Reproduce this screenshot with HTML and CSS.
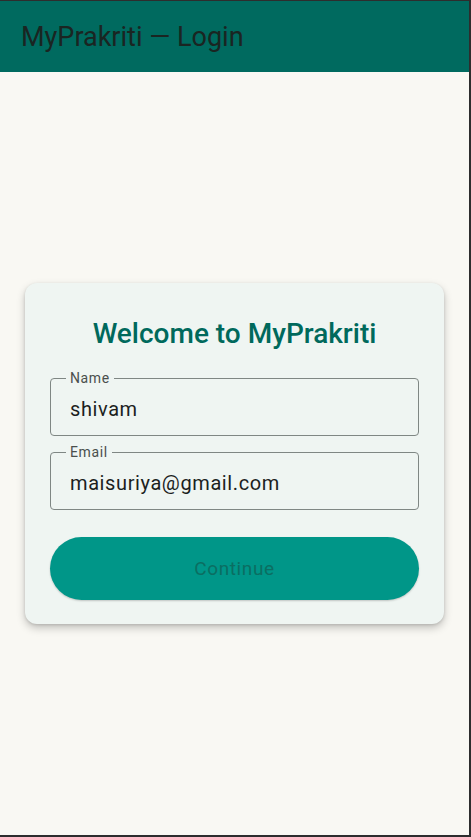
FILE: index.html
```html
<!DOCTYPE html>
<html lang="en">
<head>
<meta charset="utf-8">
<title>MyPrakriti — Login</title>
<link rel="stylesheet" href="styles.css">
</head>
<body>
<div class="frame">
  <header class="appbar">
    <h1 class="appbar-title">MyPrakriti — Login</h1>
  </header>
  <main class="content">
    <section class="card">
      <h2 class="card-title">Welcome to MyPrakriti</h2>
      <div class="field">
        <span class="field-label">Name</span>
        <span class="field-value">shivam</span>
      </div>
      <div class="field">
        <span class="field-label">Email</span>
        <span class="field-value">maisuriya@gmail.com</span>
      </div>
      <button class="btn" type="button">Continue</button>
    </section>
  </main>
</div>
</body>
</html>
```
FILE: styles.css
```css
* { box-sizing: border-box; }
html, body { margin: 0; padding: 0; }
body {
  font-family: Roboto, "Noto Sans", "Liberation Sans", sans-serif;
  background: #2d2d2d;
}
.frame {
  width: 471px;
  height: 837px;
  border-top: 1px solid #2d2d2d;
  border-right: 2px solid #2d2d2d;
  border-bottom: 2px solid #2d2d2d;
  display: flex;
  flex-direction: column;
  background: #f9f8f3;
}
.appbar {
  height: 71px;
  flex: none;
  background: #006a5f;
  display: flex;
  align-items: center;
  padding-left: 21px;
}
.appbar-title {
  margin: 0;
  font-weight: 400;
  font-size: 27px;
  color: #1a2522;
  letter-spacing: 0;
}
.content {
  flex: 1;
  display: flex;
  align-items: center;
  justify-content: flex-start;
  padding: 0 0 0 25px;
}
.card {
  width: 419px;
  background: #eff5f2;
  border-radius: 12px;
  box-shadow: 0 4px 8px rgba(0,0,0,0.22), 0 1px 3px rgba(0,0,0,0.12);
  padding: 35px 25px 24px;
  display: flex;
  flex-direction: column;
}
.card-title {
  margin: 0 0 28px;
  text-align: center;
  font-size: 28px;
  line-height: 32px;
  font-weight: 500;
  color: #00695c;
}
.field {
  position: relative;
  height: 58px;
  border: 1px solid #7f8784;
  border-radius: 4px;
  display: flex;
  align-items: center;
  padding: 0 19px;
  margin-bottom: 16px;
}
.field-label {
  position: absolute;
  top: -9px;
  left: 15px;
  padding: 0 4px;
  background: #eff5f2;
  font-size: 14px;
  line-height: 16px;
  color: #4a4f4d;
  letter-spacing: 0.6px;
}
.field-value {
  font-size: 20px;
  color: #1c1f1e;
  letter-spacing: 0.6px;
  margin-top: 3px;
}
.btn {
  margin-top: 11px;
  height: 63px;
  border: none;
  border-radius: 32px;
  background: #009688;
  color: #0b6e62;
  font-family: inherit;
  font-size: 19px;
  font-weight: 400;
  letter-spacing: 0.6px;
  box-shadow: 0 1px 2px rgba(0,0,0,0.2);
}
```
